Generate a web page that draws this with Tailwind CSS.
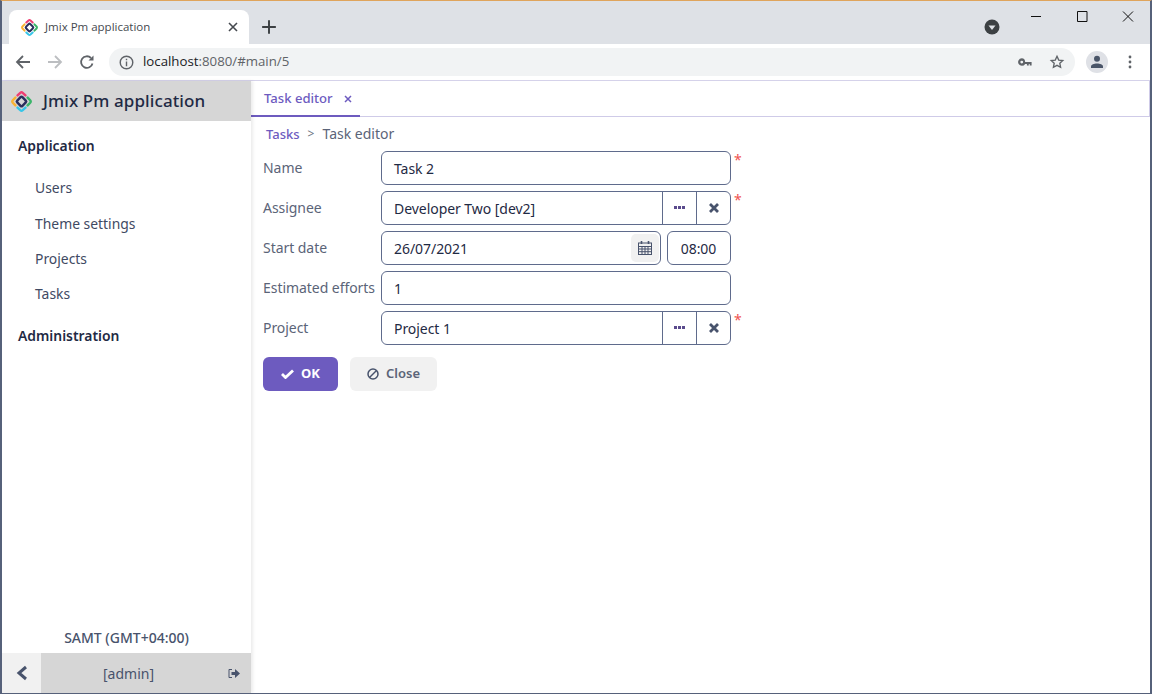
<!DOCTYPE html>
<html lang="en">
<head>
  <meta charset="UTF-8" />
  <title>Jmix Pm application</title>
  <script src="https://cdn.jsdelivr.net/npm/@tailwindcss/browser@4"></script>
</head>
<body class="m-0 overflow-hidden bg-white font-['Noto_Sans','Open_Sans',sans-serif]">
  <div class="flex flex-col w-[1152px] h-[694px] border-x-2 border-b border-t border-[#56617a] border-t-[#dfa45c] overflow-hidden">

    <!-- chrome tab strip -->
    <div class="flex h-[43px] bg-[#dee1e6] pt-[9px] pl-[7px] shrink-0">
      <div class="flex items-center w-[240px] h-[34px] bg-white rounded-t-lg pl-3 pr-[10px] font-['Open_Sans',sans-serif]">
        <svg class="w-[17px] h-[17px] mr-[7px]" viewBox="0 0 24 24" fill="none" stroke-width="2.800" stroke-linecap="round">
          <path d="M7.500 5l3.100-2.900q1.400-1.200 2.800 0L16.500 5" stroke="#ef3f73"/>
          <path d="M7.500 5l3.100-2.900q1.400-1.200 2.800 0L16.500 5" stroke="#3bb56a" transform="rotate(90 12 12)"/>
          <path d="M7.500 5l3.100-2.900q1.400-1.200 2.800 0L16.500 5" stroke="#37c6e8" transform="rotate(180 12 12)"/>
          <path d="M7.500 5l3.100-2.900q1.400-1.200 2.800 0L16.500 5" stroke="#f9b233" transform="rotate(270 12 12)"/>
          <rect x="7.800" y="7.800" width="8.400" height="8.400" rx="1.500" transform="rotate(45 12 12)" stroke="#2a2f5e"/>
        </svg>
        <span class="text-[11.500px] text-[#45494f]">Jmix Pm application</span>
        <svg class="w-3 h-3 ml-auto" viewBox="0 0 12 12" stroke="#45494f" stroke-width="1.600"><path d="M2 2l8 8M10 2l-8 8"/></svg>
      </div>
      <svg class="w-4 h-4 ml-3 mt-[9px]" viewBox="0 0 14 14" stroke="#3c4043" stroke-width="1.700"><path d="M7 1v12M1 7h12"/></svg>
      <div class="flex items-start ml-auto -mt-[9px] -mr-[1px]">
        <svg class="w-4 h-4 mt-[18px] mr-[13px]" viewBox="0 0 16 16"><circle cx="8" cy="8" r="7.500" fill="#3c4043"/><path d="M4.500 6.500h7L8 11z" fill="#dee1e6"/></svg>
        <svg class="w-[46px] h-[30px]" viewBox="0 0 46 30" stroke="#111" fill="none"><path d="M18 15.500h10"/></svg>
        <svg class="w-[46px] h-[30px]" viewBox="0 0 46 30" stroke="#111" fill="none"><path d="M18.500 10.500h9.500v10h-9.500z"/></svg>
        <svg class="w-[46px] h-[30px]" viewBox="0 0 46 30" stroke="#111" fill="none"><path d="M18 10.500l10 10M28 10.500l-10 10"/></svg>
      </div>
    </div>

    <!-- chrome toolbar -->
    <div class="flex items-center h-[36px] bg-white pl-[13px] shrink-0 font-['Open_Sans',sans-serif]">
      <svg class="w-4 h-4" viewBox="0 0 16 16" fill="none" stroke="#5f6368" stroke-width="1.800"><path d="M15 8H2M8 2L2 8l6 6"/></svg>
      <svg class="w-4 h-4 ml-4" viewBox="0 0 16 16" fill="none" stroke="#bcbec1" stroke-width="1.800"><path d="M1 8h13M8 2l6 6-6 6"/></svg>
      <svg class="w-4 h-4 ml-4" viewBox="0 0 16 16" fill="none" stroke="#5f6368" stroke-width="1.800"><path d="M13.500 9.500A5.800 5.800 0 1 1 12 4"/><path d="M14.500 1.500v5h-5" fill="#5f6368" stroke="none"/></svg>
      <div class="flex items-center w-[966px] h-[28px] ml-[14px] pl-[10px] pr-[9px] rounded-full bg-[#f1f3f4]">
        <svg class="w-[15px] h-[15px]" viewBox="0 0 16 16" fill="none" stroke="#5f6368" stroke-width="1.500"><circle cx="8" cy="8" r="6.700"/><path d="M8 7v5M8 4v1.700"/></svg>
        <span class="ml-[9px] text-[13.250px] text-[#202124]">localhost<span class="text-[#5f6368]">:8080/#main/5</span></span>
        <svg class="w-[15px] h-[15px] ml-auto" viewBox="0 0 16 16" fill="#5f6368"><path d="M4 3.500a4 4 0 1 0 3.600 6H9.500v1.800h2V9.500h1v1.800h2V7.500H7.600A4 4 0 0 0 4 3.500zm0 2.500a1.500 1.500 0 1 1 0 3 1.500 1.500 0 0 1 0-3z"/></svg>
        <svg class="w-[16px] h-[16px] ml-[16px] mr-[1px]" viewBox="0 0 24 24" fill="none" stroke="#5f6368" stroke-width="2"><path d="M12 3.500l2.600 5.600 6.100.700-4.500 4.200 1.200 6-5.400-3-5.400 3 1.200-6-4.500-4.200 6.100-.700z"/></svg>
      </div>
      <div class="flex items-center justify-center w-[22px] h-[22px] ml-[11px] rounded-full bg-[#dfe1e6]">
        <svg class="w-[14px] h-[14px]" viewBox="0 0 14 14" fill="#4a5568"><circle cx="7" cy="3.800" r="3"/><path d="M1 13v-1.500C1 9.500 4 8.500 7 8.500s6 1 6 3V13z"/></svg>
      </div>
      <svg class="w-[4px] h-[14px] ml-[20px]" viewBox="0 0 4 14" fill="#5f6368"><circle cx="2" cy="2" r="1.400"/><circle cx="2" cy="7" r="1.400"/><circle cx="2" cy="12" r="1.400"/></svg>
    </div>

    <div class="flex flex-1 min-h-0 border-t border-[#d5d2ea]">

      <!-- side menu -->
      <aside class="flex flex-col w-[249px] shrink-0 shadow-[2px_0_3px_rgba(0,0,0,0.08)] z-10">
        <div class="flex items-center h-[40px] bg-[#d6d6d6] pl-[9px]">
          <svg class="w-[21px] h-[21px]" viewBox="0 0 24 24" fill="none" stroke-width="2.800" stroke-linecap="round">
            <path d="M7.500 5l3.100-2.900q1.400-1.200 2.800 0L16.500 5" stroke="#ef3f73"/>
            <path d="M7.500 5l3.100-2.900q1.400-1.200 2.800 0L16.500 5" stroke="#3bb56a" transform="rotate(90 12 12)"/>
            <path d="M7.500 5l3.100-2.900q1.400-1.200 2.800 0L16.500 5" stroke="#37c6e8" transform="rotate(180 12 12)"/>
            <path d="M7.500 5l3.100-2.900q1.400-1.200 2.800 0L16.500 5" stroke="#f9b233" transform="rotate(270 12 12)"/>
            <rect x="7.800" y="7.800" width="8.400" height="8.400" rx="1.500" transform="rotate(45 12 12)" stroke="#2a2f5e"/>
          </svg>
          <span class="ml-[11px] text-[17px] tracking-[0.1px] font-medium text-[#1f2a44]">Jmix Pm application</span>
        </div>
        <nav class="flex flex-col pt-[14px] text-[13.900px] text-[#3f4a63]">
          <span class="pl-[16px] h-[21px] leading-[21px] font-semibold text-[#1f2a44]">Application</span>
          <span class="pl-[33px] mt-[21px] h-[21px] leading-[21px]">Users</span>
          <span class="pl-[33px] mt-[15px] h-[21px] leading-[21px]">Theme settings</span>
          <span class="pl-[33px] mt-[14px] h-[21px] leading-[21px]">Projects</span>
          <span class="pl-[33px] mt-[14px] h-[21px] leading-[21px]">Tasks</span>
          <span class="pl-[16px] mt-[21px] h-[21px] leading-[21px] font-semibold text-[#1f2a44]">Administration</span>
        </nav>
        <div class="mt-auto text-center text-[14px] font-medium text-[#48536c] leading-[18px] mb-[6px]">SAMT (GMT+04:00)</div>
        <div class="flex items-center h-[40px] bg-[#d6d6d6]">
          <div class="flex items-center justify-center w-[39px] h-full bg-[#f1f1f1]">
            <svg class="w-[12px] h-[16px]" viewBox="0 0 12 16" fill="none" stroke="#48536c" stroke-width="3"><path d="M10 2L3 8l7 6"/></svg>
          </div>
          <span class="flex-1 text-center text-[14px] text-[#48536c] pr-[12px]">[admin]</span>
          <svg class="w-[12px] h-[11px] mr-[11px]" viewBox="0 0 12 11" fill="#48536c"><path d="M4 1H1.500C1 1 .500 1.500.500 2v7c0 .500.500 1 1 1H4V9H1.500V2H4z"/><path d="M3.500 4H7V1l5 4.500L7 10V7H3.500z"/></svg>
        </div>
      </aside>

      <!-- main area -->
      <main class="flex flex-col flex-1 min-w-0 text-[#3f4a63]">
        <div class="flex h-[36px] border-b border-r border-[#cfcbe8] shrink-0">
          <div class="flex items-center w-[109px] h-[36px] pl-[13px] pt-[1px] border-b-2 border-[#6d5bbf]">
            <span class="text-[13.100px] font-medium text-[#6d5bbf]">Task editor</span>
            <svg class="w-[8px] h-[8px] ml-[11px]" viewBox="0 0 8 8" stroke="#6d5bbf" stroke-width="1.500"><path d="M1 1l6 6M7 1L1 7"/></svg>
          </div>
        </div>
        <div class="flex items-center h-[34px] pl-[15px] text-[14px]">
          <span class="text-[13px] font-medium text-[#6d5bbf] pt-[1px]">Tasks</span>
          <span class="ml-[8px] text-[12px] text-[#6b7280]">&gt;</span>
          <span class="ml-[8px] -mt-[1px] text-[#5b6478]">Task editor</span>
        </div>

        <form class="flex flex-col gap-[6px] pl-[12px] text-[14px] tracking-[-0.05px]">
          <div class="flex items-center">
            <label class="w-[118px] -mt-[2px] text-[#5b6478]">Name</label>
            <div class="w-[350px] h-[34px] flex items-center pl-[12px] border border-[#5f6b8c] rounded-[6px] text-[#1f2a44]">Task 2</div>
            <span class="self-start -mt-[2px] ml-[3px] text-[14px] text-[#ef5350]">*</span>
          </div>
          <div class="flex items-center">
            <label class="w-[118px] -mt-[2px] text-[#5b6478]">Assignee</label>
            <div class="flex w-[350px] h-[34px] items-center border border-[#5f6b8c] rounded-[6px] text-[#1f2a44]">
              <span class="flex-1 pl-[12px]">Developer Two [dev2]</span>
              <span class="flex items-center justify-center w-[34px] h-full border-l border-[#5f6b8c]">
                <svg class="w-[11px] h-[4px]" viewBox="0 0 11 4" fill="#5a4a8c"><path d="M0 0h3v3H0zM4 0h3v3H4zM8 0h3v3H8z"/></svg>
              </span>
              <span class="flex items-center justify-center w-[34px] h-full border-l border-[#5f6b8c]">
                <svg class="w-[10px] h-[10px]" viewBox="0 0 10 10" stroke="#48536c" stroke-width="2.800"><path d="M1 1l8 8M9 1L1 9"/></svg>
              </span>
            </div>
            <span class="self-start -mt-[2px] ml-[3px] text-[14px] text-[#ef5350]">*</span>
          </div>
          <div class="flex items-center">
            <label class="w-[118px] -mt-[2px] text-[#5b6478]">Start date</label>
            <div class="flex w-[280px] h-[34px] items-center pl-[12px] pr-[1px] border border-[#5f6b8c] rounded-[6px] text-[#1f2a44]">
              <span class="flex-1">26/07/2021</span>
              <span class="flex items-center justify-center w-[28px] h-[28px] rounded-[5px] bg-[#f1f1f1]">
                <svg class="w-[14px] h-[14px]" viewBox="0 0 14 14" fill="none" stroke="#48536c"><rect x="0.500" y="2" width="13" height="11.500"/><path d="M0.500 5.500h13M0.500 8h13M0.500 10.700h13M4 5v8M7 5v8M10 5v8"/><path d="M3.500 0v3M10.500 0v3" stroke-width="1.600"/></svg>
              </span>
            </div>
            <div class="flex items-center justify-center w-[64px] h-[34px] ml-[6px] pr-[1px] border border-[#5f6b8c] rounded-[6px] text-[#1f2a44]">08:00</div>
          </div>
          <div class="flex items-center">
            <label class="w-[118px] -mt-[2px] text-[#5b6478]">Estimated efforts</label>
            <div class="w-[350px] h-[34px] flex items-center pl-[12px] border border-[#5f6b8c] rounded-[6px] text-[#1f2a44]">1</div>
          </div>
          <div class="flex items-center">
            <label class="w-[118px] -mt-[2px] text-[#5b6478]">Project</label>
            <div class="flex w-[350px] h-[34px] items-center border border-[#5f6b8c] rounded-[6px] text-[#1f2a44]">
              <span class="flex-1 pl-[12px]">Project 1</span>
              <span class="flex items-center justify-center w-[34px] h-full border-l border-[#5f6b8c]">
                <svg class="w-[11px] h-[4px]" viewBox="0 0 11 4" fill="#5a4a8c"><path d="M0 0h3v3H0zM4 0h3v3H4zM8 0h3v3H8z"/></svg>
              </span>
              <span class="flex items-center justify-center w-[34px] h-full border-l border-[#5f6b8c]">
                <svg class="w-[10px] h-[10px]" viewBox="0 0 10 10" stroke="#48536c" stroke-width="2.800"><path d="M1 1l8 8M9 1L1 9"/></svg>
              </span>
            </div>
            <span class="self-start -mt-[2px] ml-[3px] text-[14px] text-[#ef5350]">*</span>
          </div>
          <div class="flex gap-[12px] mt-[6px] tracking-normal">
            <div class="flex items-center justify-center gap-[7px] w-[75px] h-[34px] rounded-[6px] bg-[#6d5bbf] text-white text-[13px] font-bold">
              <svg class="w-[13px] h-[10px]" viewBox="0 0 13 10" fill="none" stroke="#fff" stroke-width="2.800"><path d="M1 5l3.500 3.500L12 1.500"/></svg>
              OK
            </div>
            <div class="flex items-center justify-center gap-[7px] w-[87px] h-[34px] rounded-[6px] bg-[#f1f1f1] text-[#5b6478] text-[13px] font-semibold">
              <svg class="w-[12px] h-[12px]" viewBox="0 0 12 12" fill="none" stroke="#48536c" stroke-width="1.500"><circle cx="6" cy="6" r="5"/><path d="M2.500 9.500l7-7"/></svg>
              Close
            </div>
          </div>
        </form>
      </main>
    </div>
  </div>
</body>
</html>
